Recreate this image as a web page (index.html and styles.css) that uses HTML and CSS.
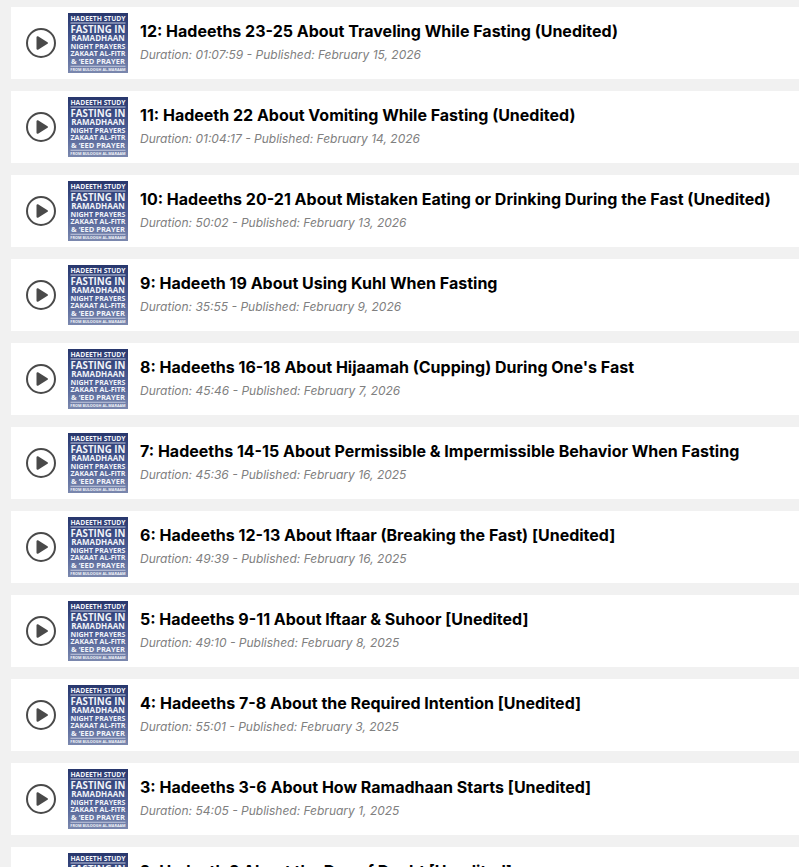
FILE: index.html
```html
<!DOCTYPE html>
<html lang="en">
<head>
    <meta charset="UTF-8">
    <meta name="viewport" content="width=device-width, initial-scale=1.0">
    <title>Fasting in Ramadhaan</title>
    <link rel="stylesheet" href="styles.css">
</head>
<body>
    <!-- Shared drawings -->
    <svg class="sprites" aria-hidden="true">
        <defs>
            <linearGradient id="coverSky" x1="0" y1="0" x2="0" y2="1">
                <stop offset="0" stop-color="#28376d"/>
                <stop offset="0.5" stop-color="#485a92"/>
                <stop offset="1" stop-color="#7b88ae"/>
            </linearGradient>
        </defs>
        <symbol id="play" viewBox="0 0 30 30">
            <circle cx="15" cy="15" r="14" fill="none" stroke="#4a4a4a" stroke-width="2"/>
            <path d="M11.5 9.2v11.6L21 15z" fill="#4a4a4a" stroke="#4a4a4a" stroke-width="2" stroke-linejoin="round"/>
        </symbol>
        <symbol id="cover" viewBox="0 0 240 240">
            <rect width="240" height="240" fill="url(#coverSky)"/>
            <g class="cover-text">
                <text x="120" y="30" font-size="27">HADEETH STUDY</text>
                <text x="120" y="79" font-size="39">FASTING IN</text>
                <text x="120" y="112" font-size="32">RAMADHAAN</text>
                <text x="120" y="144" font-size="28">NIGHT PRAYERS</text>
                <text x="120" y="173" font-size="28">ZAKAAT AL-FITR</text>
                <text x="120" y="205" font-size="30">&amp; ‘EED PRAYER</text>
                <text x="120" y="233" font-size="15">FROM BULOOGH AL-MARAAM</text>
            </g>
            <path d="M10 40h220M10 213h220" stroke="#c3cae0" stroke-width="4"/>
        </symbol>
    </svg>

    <main class="episodes">
        <article class="episode">
            <button class="play" type="button" aria-label="Play episode 12"><svg><use href="#play"/></svg></button>
            <svg class="cover"><use href="#cover"/></svg>
            <div class="info">
                <h2>12: Hadeeths 23-25 About Traveling While Fasting (Unedited)</h2>
                <p>Duration: 01:07:59 - Published: February 15, 2026</p>
            </div>
        </article>
        <article class="episode">
            <button class="play" type="button" aria-label="Play episode 11"><svg><use href="#play"/></svg></button>
            <svg class="cover"><use href="#cover"/></svg>
            <div class="info">
                <h2>11: Hadeeth 22 About Vomiting While Fasting (Unedited)</h2>
                <p>Duration: 01:04:17 - Published: February 14, 2026</p>
            </div>
        </article>
        <article class="episode">
            <button class="play" type="button" aria-label="Play episode 10"><svg><use href="#play"/></svg></button>
            <svg class="cover"><use href="#cover"/></svg>
            <div class="info">
                <h2>10: Hadeeths 20-21 About Mistaken Eating or Drinking During the Fast (Unedited)</h2>
                <p>Duration: 50:02 - Published: February 13, 2026</p>
            </div>
        </article>
        <article class="episode">
            <button class="play" type="button" aria-label="Play episode 9"><svg><use href="#play"/></svg></button>
            <svg class="cover"><use href="#cover"/></svg>
            <div class="info">
                <h2>9: Hadeeth 19 About Using Kuhl When Fasting</h2>
                <p>Duration: 35:55 - Published: February 9, 2026</p>
            </div>
        </article>
        <article class="episode">
            <button class="play" type="button" aria-label="Play episode 8"><svg><use href="#play"/></svg></button>
            <svg class="cover"><use href="#cover"/></svg>
            <div class="info">
                <h2>8: Hadeeths 16-18 About Hijaamah (Cupping) During One's Fast</h2>
                <p>Duration: 45:46 - Published: February 7, 2026</p>
            </div>
        </article>
        <article class="episode">
            <button class="play" type="button" aria-label="Play episode 7"><svg><use href="#play"/></svg></button>
            <svg class="cover"><use href="#cover"/></svg>
            <div class="info">
                <h2>7: Hadeeths 14-15 About Permissible &amp; Impermissible Behavior When Fasting</h2>
                <p>Duration: 45:36 - Published: February 16, 2025</p>
            </div>
        </article>
        <article class="episode">
            <button class="play" type="button" aria-label="Play episode 6"><svg><use href="#play"/></svg></button>
            <svg class="cover"><use href="#cover"/></svg>
            <div class="info">
                <h2>6: Hadeeths 12-13 About Iftaar (Breaking the Fast) [Unedited]</h2>
                <p>Duration: 49:39 - Published: February 16, 2025</p>
            </div>
        </article>
        <article class="episode">
            <button class="play" type="button" aria-label="Play episode 5"><svg><use href="#play"/></svg></button>
            <svg class="cover"><use href="#cover"/></svg>
            <div class="info">
                <h2>5: Hadeeths 9-11 About Iftaar &amp; Suhoor [Unedited]</h2>
                <p>Duration: 49:10 - Published: February 8, 2025</p>
            </div>
        </article>
        <article class="episode">
            <button class="play" type="button" aria-label="Play episode 4"><svg><use href="#play"/></svg></button>
            <svg class="cover"><use href="#cover"/></svg>
            <div class="info">
                <h2>4: Hadeeths 7-8 About the Required Intention [Unedited]</h2>
                <p>Duration: 55:01 - Published: February 3, 2025</p>
            </div>
        </article>
        <article class="episode">
            <button class="play" type="button" aria-label="Play episode 3"><svg><use href="#play"/></svg></button>
            <svg class="cover"><use href="#cover"/></svg>
            <div class="info">
                <h2>3: Hadeeths 3-6 About How Ramadhaan Starts [Unedited]</h2>
                <p>Duration: 54:05 - Published: February 1, 2025</p>
            </div>
        </article>
        <article class="episode">
            <button class="play" type="button" aria-label="Play episode 2"><svg><use href="#play"/></svg></button>
            <svg class="cover"><use href="#cover"/></svg>
            <div class="info">
                <h2>2: Hadeeth 2 About the Day of Doubt [Unedited]</h2>
            </div>
        </article>
    </main>
</body>
</html>
```
FILE: styles.css
```css
body {
    margin: 0;
    background-color: #f1f1f1;
    font-family: Inter, "Liberation Sans", sans-serif;
    color: #000;
}

.sprites {
    display: block;
    width: 0;
    height: 0;
}

.episodes {
    display: flex;
    flex-direction: column;
    gap: 12px;
    padding: 7px 0 12px 11px;
}

.episode {
    display: flex;
    align-items: center;
    gap: 12px;
    padding: 6px 0 6px 15px;
    background-color: #fff;
}

.play {
    flex: none;
    padding: 0;
    border: none;
    background: none;
    cursor: pointer;
}

.play svg {
    display: block;
    width: 30px;
    height: 30px;
}

.cover {
    flex: none;
    width: 60px;
    height: 60px;
}

.cover-text {
    font-family: "Open Sans", "Noto Sans", sans-serif;
    font-weight: 700;
    fill: #f1f3f9;
    text-anchor: middle;
}

.info {
    min-width: 0;
    min-height: 48px;
}

.info h2 {
    margin: 0;
    font-size: 16px;
    font-weight: 700;
    line-height: 24px;
}

.info p {
    margin: 0;
    font-size: 12px;
    font-style: italic;
    line-height: 24px;
    color: #808080;
}
```
